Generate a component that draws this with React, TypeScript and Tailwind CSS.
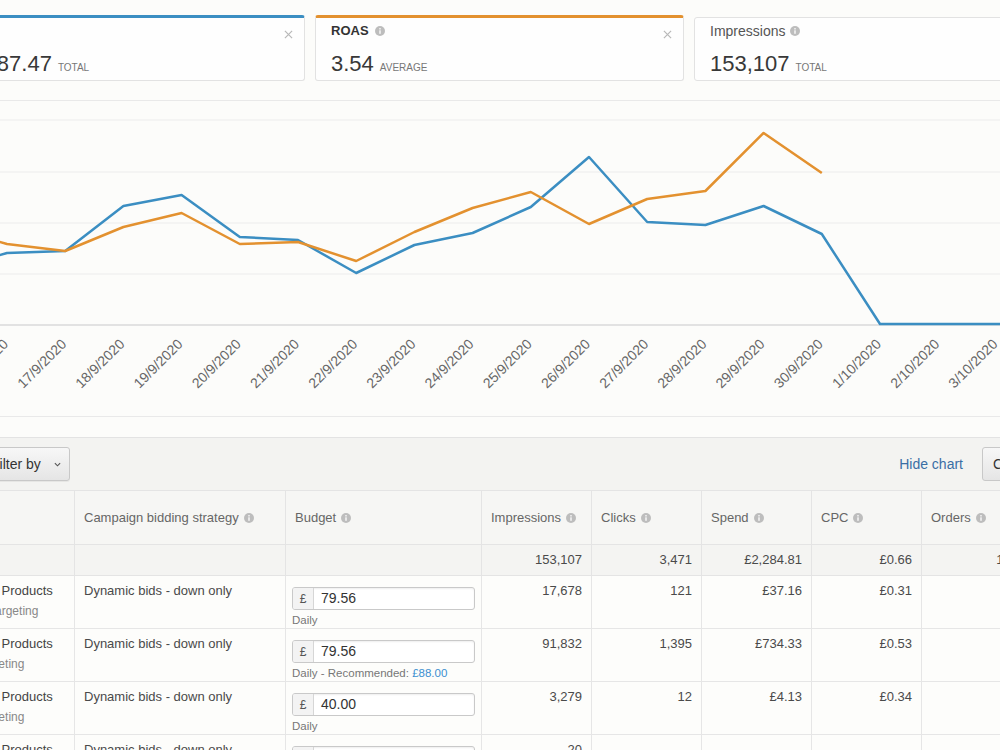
import React from "react";

const X0 = 7;
const STEP = 58.2;

const DATES = [
  "16/9/2020", "17/9/2020", "18/9/2020", "19/9/2020", "20/9/2020", "21/9/2020",
  "22/9/2020", "23/9/2020", "24/9/2020", "25/9/2020", "26/9/2020", "27/9/2020",
  "28/9/2020", "29/9/2020", "30/9/2020", "1/10/2020", "2/10/2020", "3/10/2020",
];

// daily series in chart pixel space (y grows downward)
const SALES = [253, 251, 206, 195, 237, 240, 273, 245, 233, 207, 157, 222, 225, 206, 234, 324, 324, 324];
const ROAS = [244, 251, 227, 213, 244, 242, 261, 232, 208, 192, 224, 199, 191, 133, 173];

const xAt = (i: number) => X0 + i * STEP;

function points(ys: number[], lead: number, tail?: [number, number]) {
  const pts = [`${xAt(-1)},${lead}`, ...ys.map((y, i) => `${xAt(i)},${y}`)];
  if (tail) pts.push(`${tail[0]},${tail[1]}`);
  return pts.join(" ");
}

function InfoIcon() {
  return (
    <svg viewBox="0 0 10 10" className="w-[10px] h-[10px] shrink-0">
      <circle cx="5" cy="5" r="5" fill="#bdbdbd" />
      <rect x="4.35" y="4.3" width="1.3" height="3.5" fill="#fff" />
      <circle cx="5" cy="2.85" r="0.8" fill="#fff" />
    </svg>
  );
}

function CloseIcon() {
  return (
    <svg viewBox="0 0 10 10" className="w-[9px] h-[9px]">
      <path d="M1 1L9 9M9 1L1 9" stroke="#b8b8b8" strokeWidth="1.3" />
    </svg>
  );
}

function Chevron() {
  return (
    <svg viewBox="0 0 8 5" className="w-[7px] h-[5px]">
      <path d="M1 1l3 3 3-3" fill="none" stroke="#555" strokeWidth="1.3" />
    </svg>
  );
}

function MetricCards() {
  return (
    <div className="h-[100px] pt-[15px] flex gap-[10px] -ml-[62px]">
      <div className="w-[367px] shrink-0 h-[66px] border border-[#e2e2e2] border-t-[3px] border-t-[#3b8ec2] rounded-[3px] bg-[#fefefe] px-[15px] pt-[5px]">
        <div className="flex justify-between items-start h-[16px]">
          <div className="text-[12px] leading-[16px] font-bold text-[#333]">Sales</div>
          <div className="pt-[7px] -mr-[4px]"><CloseIcon /></div>
        </div>
        <div className="mt-[12px] h-[26px] flex items-baseline">
          <span className="text-[22px] leading-[26px] text-[#383838]">£8,087.47</span>
          <span className="ml-[6px] text-[10px] text-[#777] uppercase">Total</span>
        </div>
      </div>

      <div className="w-[369px] shrink-0 h-[66px] border border-[#e2e2e2] border-t-[3px] border-t-[#e3912f] rounded-[3px] bg-[#fefefe] px-[15px] pt-[5px]">
        <div className="flex justify-between items-start h-[16px]">
          <div className="flex items-center gap-[6px] text-[13px] leading-[16px] font-bold text-[#333]">
            ROAS <InfoIcon />
          </div>
          <div className="pt-[7px] -mr-[4px]"><CloseIcon /></div>
        </div>
        <div className="mt-[12px] h-[26px] flex items-baseline">
          <span className="text-[22px] leading-[26px] text-[#383838]">3.54</span>
          <span className="ml-[6px] text-[10px] text-[#777] uppercase">Average</span>
        </div>
      </div>

      <div className="w-[369px] shrink-0 mt-[2px] h-[64px] border border-[#e2e2e2] rounded-[3px] bg-[#fefefe] px-[15px] pt-[5px]">
        <div className="flex items-center gap-[5px] h-[16px] text-[14px] leading-[16px] text-[#555]">
          Impressions <InfoIcon />
        </div>
        <div className="mt-[12px] h-[26px] flex items-baseline">
          <span className="text-[22px] leading-[26px] text-[#383838]">153,107</span>
          <span className="ml-[6px] text-[10px] text-[#777] uppercase">Total</span>
        </div>
      </div>
    </div>
  );
}

function Chart() {
  return (
    <div className="border-t border-b border-[#e9e9e9]">
      <svg width="1000" height="315" viewBox="0 101 1000 315" className="block">
        {[120, 172, 223, 274].map((y) => (
          <line key={y} x1="0" x2="1000" y1={y} y2={y} stroke="#ececec" strokeWidth="1" />
        ))}
        <line x1="0" x2="1000" y1="325" y2="325" stroke="#e2e2e2" strokeWidth="2" />
        <polyline
          points={points(SALES, 270, [1000, 324])}
          fill="none"
          stroke="#3b8ec2"
          strokeWidth="2.5"
          strokeLinejoin="round"
        />
        <polyline
          points={points(ROAS, 227)}
          fill="none"
          stroke="#e3912f"
          strokeWidth="2.5"
          strokeLinejoin="round"
        />
        {DATES.map((d, i) => {
          const ax = xAt(i) + 2;
          return (
            <text
              key={d}
              x={ax}
              y={345}
              transform={`rotate(-45 ${ax} 345)`}
              textAnchor="end"
              fontSize="14"
              fill="#666"
              fontFamily="'Liberation Sans', Arial, sans-serif"
            >
              {d}
            </text>
          );
        })}
      </svg>
    </div>
  );
}

function Toolbar() {
  return (
    <div className="border-t border-[#e3e3e3] bg-[#f3f3f1] h-[53px]">
      <div className="flex items-center h-[52px] -ml-[20px] w-[1102px]">
        <button className="w-[90px] h-[34px] pl-[10px] flex items-center rounded-[3px] border border-[#c8c8c8] bg-linear-to-b from-[#f7f7f7] to-[#e5e5e5] text-[14px] text-[#333] shadow-[0_1px_0_rgba(0,0,0,0.05)]">
          Filter by
          <span className="ml-[13px] flex"><Chevron /></span>
        </button>
        <div className="ml-auto flex items-center gap-[19px]">
          <span className="text-[14px] text-[#3a6ea5]">Hide chart</span>
          <button className="w-[100px] h-[34px] pl-[10px] flex items-center gap-[10px] rounded-[3px] border border-[#c8c8c8] bg-linear-to-b from-[#f7f7f7] to-[#e5e5e5] text-[14px] text-[#333]">
            Columns <Chevron />
          </button>
        </div>
      </div>
    </div>
  );
}

const GRID = "grid grid-cols-[150px_211px_196px_110px_110px_110px_110px_106px]";

const HEADERS = [
  "",
  "Campaign bidding strategy",
  "Budget",
  "Impressions",
  "Clicks",
  "Spend",
  "CPC",
  "Orders",
];

type Row = {
  kind: string;
  budget: string;
  rec?: string;
  nums: string[];
};

const ROWS: Row[] = [
  { kind: "Automatic targeting", budget: "79.56", nums: ["17,678", "121", "£37.16", "£0.31", "4"] },
  { kind: "Manual targeting", budget: "79.56", rec: "£88.00", nums: ["91,832", "1,395", "£734.33", "£0.53", "71"] },
  { kind: "Manual targeting", budget: "40.00", nums: ["3,279", "12", "£4.13", "£0.34", "1"] },
  { kind: "Manual targeting", budget: "25.00", nums: ["20", "", "", "", ""] },
];

function BudgetInput({ value }: { value: string }) {
  return (
    <div className="flex w-[183px] h-[23px] border border-[#c9c9c9] rounded-[3px] bg-white overflow-hidden shadow-[inset_0_1px_2px_rgba(0,0,0,0.07)]">
      <div className="w-[21px] flex items-center justify-center bg-[#f3f3f3] border-r border-[#d6d6d6] text-[12px] text-[#555]">
        £
      </div>
      <div className="pl-[7px] flex items-center text-[14px] text-[#333]">{value}</div>
    </div>
  );
}

function Table() {
  return (
    <div className="-ml-[75px] w-[1103px]">
      <div className={`${GRID} h-[55px] border-t border-b border-[#e4e4e4] bg-[#f6f6f4]`}>
        {HEADERS.map((h, i) => (
          <div
            key={i}
            className="flex items-center gap-[5px] pl-[9px] border-r border-[#e4e4e4] text-[13px] text-[#666]"
          >
            {h && (
              <>
                {h} <InfoIcon />
              </>
            )}
          </div>
        ))}
      </div>

      <div className={`${GRID} h-[31px] border-b border-[#e4e4e4] bg-[#f4f4f2]`}>
        <div className="border-r border-[#e4e4e4]" />
        <div className="border-r border-[#e4e4e4]" />
        <div className="border-r border-[#e4e4e4]" />
        {["153,107", "3,471", "£2,284.81", "£0.66", "182"].map((v) => (
          <div
            key={v}
            className="flex items-center justify-end pr-[9px] border-r border-[#e4e4e4] text-[13px] text-[#4a4a4a]"
          >
            {v}
          </div>
        ))}
      </div>

      {ROWS.map((r, idx) => (
        <div key={idx} className={`${GRID} h-[53px] border-b border-[#e6e6e6] bg-[#fdfdfb]`}>
          <div className="pt-[7px] pl-[10px] border-r border-[#e6e6e6] whitespace-nowrap">
            <div className="text-[13px] leading-[16px] text-[#444]">Sponsored Products</div>
            <div className="mt-[5px] text-[12px] leading-[15px] text-[#888]">{r.kind}</div>
          </div>
          <div className="pt-[7px] pl-[9px] border-r border-[#e6e6e6] text-[13px] leading-[16px] text-[#4a4a4a]">
            Dynamic bids - down only
          </div>
          <div className="pt-[11px] pl-[6px] border-r border-[#e6e6e6]">
            <BudgetInput value={r.budget} />
            <div className="mt-[3px] text-[11.5px] leading-[14px] text-[#777] whitespace-nowrap">
              {r.rec ? (
                <>
                  Daily - Recommended: <span className="text-[#3b8fd0]">{r.rec}</span>
                </>
              ) : (
                "Daily"
              )}
            </div>
          </div>
          {r.nums.map((n, j) => (
            <div
              key={j}
              className="pt-[7px] pr-[9px] text-right border-r border-[#e6e6e6] text-[13px] leading-[16px] text-[#4a4a4a]"
            >
              {n}
            </div>
          ))}
        </div>
      ))}
    </div>
  );
}

export default function App() {
  return (
    <div className="w-[1000px] h-[750px] overflow-hidden bg-[#fcfcfa] font-['Liberation_Sans',Arial,sans-serif]">
      <MetricCards />
      <Chart />
      <div className="h-[20px]" />
      <Toolbar />
      <Table />
    </div>
  );
}
